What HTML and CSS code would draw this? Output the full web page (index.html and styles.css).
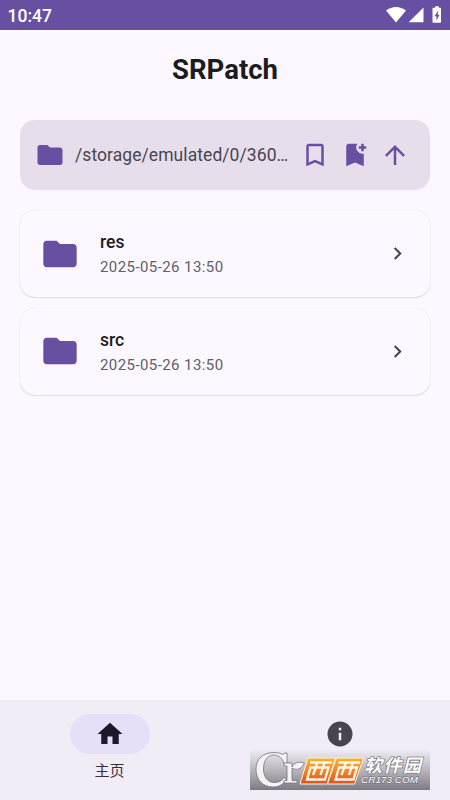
FILE: index.html
```html
<!DOCTYPE html>
<html lang="zh-CN">
<head>
<meta charset="utf-8">
<title>SRPatch</title>
<link rel="stylesheet" href="styles.css">
</head>
<body>
<svg width="0" height="0" class="defs">
  <symbol id="folder" viewBox="0 0 24 24"><path d="M10 4H4c-1.1 0-2 .9-2 2v12c0 1.1.9 2 2 2h16c1.100 0 2-.9 2-2V8c0-1.100-.9-2-2-2h-8z"/></symbol>
  <symbol id="chevron" viewBox="0 0 24 24"><path d="M10 6 8.590 7.410 13.170 12l-4.580 4.590L10 18l6-6z"/></symbol>
</svg>
<div class="app">
  <div class="status">
    <span class="time">10:47</span>
    <svg class="signals" width="56" height="20" viewBox="0 0 56 20">
      <path d="M0 5.500C6 .8 14 .8 20 5.500L10 17.500z"/>
      <path d="M37.500 2.500V17.300H22.700z"/>
      <path d="M49.200 1.200h3.600v1.600h1.700q.5 0 .5.700V17q0 .8-.8.800h-6.900q-.8 0-.8-.8V3.500q0-.7.6-.7h2.100z"/>
      <path class="bolt" d="M52.300 5.500 48.500 11.300h2V15.500l3-5.800h-1.900z"/>
    </svg>
  </div>
  <h1>SRPatch</h1>
  <div class="pathbar">
    <svg class="icon"><use href="#folder"/></svg>
    <span class="path">/storage/emulated/0/360…</span>
    <div class="actions">
      <svg class="icon" viewBox="0 0 24 24"><path d="M17 3H7c-1.100 0-2 .9-2 2v16l7-3 7 3V5c0-1.100-.9-2-2-2zm0 15-5-2.180L7 18V5h10z"/></svg>
      <svg class="icon" viewBox="0 0 24 24"><path d="M21 7h-2v2h-2V7h-2V5h2V3h2v2h2zM19 21l-7-3-7 3V5c0-1.100.9-2 2-2h7a5 5 0 0 0 5 7.900z"/></svg>
      <svg class="icon" viewBox="0 0 24 24"><path d="m4 12 1.410 1.410L11 7.830V20h2V7.830l5.580 5.590L20 12l-8-8z"/></svg>
    </div>
  </div>
  <div class="list">
    <div class="card">
      <svg class="big"><use href="#folder"/></svg>
      <div class="info"><div class="name">res</div><div class="date">2025-05-26 13:50</div></div>
      <svg class="chev"><use href="#chevron"/></svg>
    </div>
    <div class="card">
      <svg class="big"><use href="#folder"/></svg>
      <div class="info"><div class="name">src</div><div class="date">2025-05-26 13:50</div></div>
      <svg class="chev"><use href="#chevron"/></svg>
    </div>
  </div>
  <div class="nav">
    <div class="tab active">
      <span class="pill"><svg class="icon" viewBox="0 0 24 24"><path d="M10 20v-6h4v6h5v-8h3L12 3 2 12h3v8z"/></svg></span>
      <span class="label">主页</span>
    </div>
    <div class="tab">
      <span class="pill"><svg class="icon" viewBox="0 0 24 24"><path d="M12 2a10 10 0 1 0 0 20 10 10 0 0 0 0-20zm1 15h-2v-6h2zm0-8h-2V7h2z"/></svg></span>
    </div>
  </div>
  <svg class="watermark" width="180" height="40" viewBox="0 0 180 40">
    <defs>
      <linearGradient id="band" x2="0" y2="1"><stop offset="0" stop-color="#efebf3"/><stop offset=".5" stop-color="#b9b6bd"/><stop offset="1" stop-color="#7d7a82"/></linearGradient>
      <linearGradient id="orange" x2="0" y2="1"><stop offset="0" stop-color="#f3b52f"/><stop offset=".5" stop-color="#ef8728"/><stop offset="1" stop-color="#df4f20"/></linearGradient>
    </defs>
    <rect width="180" height="40" fill="url(#band)"/>
    <g class="mark">
      <path d="M37 3v11h-2.500C32 8 29 5 24 5 16.500 5 13.500 12 13.500 19s3.500 13.500 11 13.500c4.500 0 7.500-2 9.500-5l2.500 1.500c-3 5-7 8-13.500 8C12 37 6 29 6 19 6 9 13 2.500 24 2.500c4 0 7 1 9 2l2-1.500z"/>
      <path d="M34 13h8v4c2-4 6-6 12.500-4-3 6-7.500 8-12.500 5v12.500h5V33H34v-2.500h3V16h-3z"/>
    </g>
    <g fill="url(#orange)" stroke="#fff4df" stroke-width="1">
      <path d="M58 8h27.500L77 34H50z"/>
      <path d="M86.500 8h27L104.500 34H77.500z"/>
    </g>
    <g class="xi">
      <path d="M60 12.500H82M67.500 12.500 63 25M74.500 12.500 70.500 25M60.500 17.500H78.500L75 29.500H57z"/>
      <path d="M88.500 12.500h21.500M96 12.500 91.500 25M103 12.500 99 25M89 17.500h18l-3.500 12H85.500z"/>
    </g>
    <text class="brand" x="114" y="22">软件园</text>
    <text class="site" x="111" y="33" textLength="57" lengthAdjust="spacingAndGlyphs">CR173.COM</text>
  </svg>
</div>
</body>
</html>
```
FILE: styles.css
```css
* { box-sizing: border-box; }
body { margin: 0; font-family: Roboto, "Noto Sans CJK SC", sans-serif; }
.defs { position: absolute; }
.app { position: relative; display: flex; flex-direction: column; width: 450px; height: 800px; background: #fdf7ff; overflow: hidden; }
.status { display: flex; justify-content: space-between; height: 30px; padding: 5px 8px 0 7.500px; background: #6750a2; color: #fff; }
.time { font-size: 17.5px; line-height: 22px; font-weight: 500; }
.signals { fill: #fff; }
.signals .bolt { fill: #6750a2; }
h1 { margin: 20px 0 0; height: 40px; line-height: 40px; font-size: 27.5px; font-weight: 700; text-align: center; color: #1c1b20; }
.pathbar { display: flex; align-items: center; height: 70px; margin: 30px 20px 0; padding: 0 20px 0 15px; border-radius: 15px; background: #e6dfeb; }
.icon { display: block; flex: none; width: 30px; height: 30px; fill: #6750a2; }
.path { flex: none; margin-left: 10px; white-space: nowrap; font-size: 17.5px; letter-spacing: .07px; color: #49454f; }
.actions { display: flex; gap: 10px; margin-left: auto; }
.list { display: flex; flex-direction: column; gap: 10.500px; padding: 20px; }
.card { display: flex; align-items: center; height: 87px; padding: 0 20px; border-radius: 15px; background: #fdf7ff; box-shadow: 0 1px 1.500px rgba(40, 30, 50, .13), 0 0 1px rgba(40, 30, 50, .14); }
.big { width: 40px; height: 40px; fill: #6750a2; }
.info { flex: 1; margin-left: 20px; }
.name { font-size: 17.5px; line-height: 25px; font-weight: 500; color: #1c1b20; }
.date { font-size: 15px; line-height: 20px; margin-top: 2px; letter-spacing: .42px; color: #625e68; }
.chev { width: 25px; height: 25px; fill: #49454f; }
.nav { display: flex; height: 100px; margin-top: auto; padding: 14px 0 0; background: #f2ecf7; }
.tab { display: flex; flex-direction: column; align-items: center; width: 220px; }
.pill { display: flex; justify-content: center; align-items: center; width: 80px; height: 40px; border-radius: 20px; }
.pill .icon { fill: #49454f; }
.active .pill { background: #e7def7; }
.active .pill .icon { fill: #1d192b; }
.tab + .tab { margin-left: 10px; }
.label { margin-top: 7px; margin-right: 1px; font-size: 15px; line-height: 20px; color: #34313a; }
.watermark { position: absolute; left: 250px; top: 750px; }
.mark { fill: #f4f3f5; stroke: #77747b; stroke-width: .8; }
.xi { fill: none; stroke: #fff5e8; stroke-width: 2.300; }
.brand, .site { fill: #fff; stroke: #77747b; stroke-width: 1.300; paint-order: stroke; }
.brand { font: italic 700 18px "Noto Sans CJK SC", sans-serif; letter-spacing: 1.500px; }
.site { font: italic 400 9.500px "Liberation Sans", sans-serif; }
```
